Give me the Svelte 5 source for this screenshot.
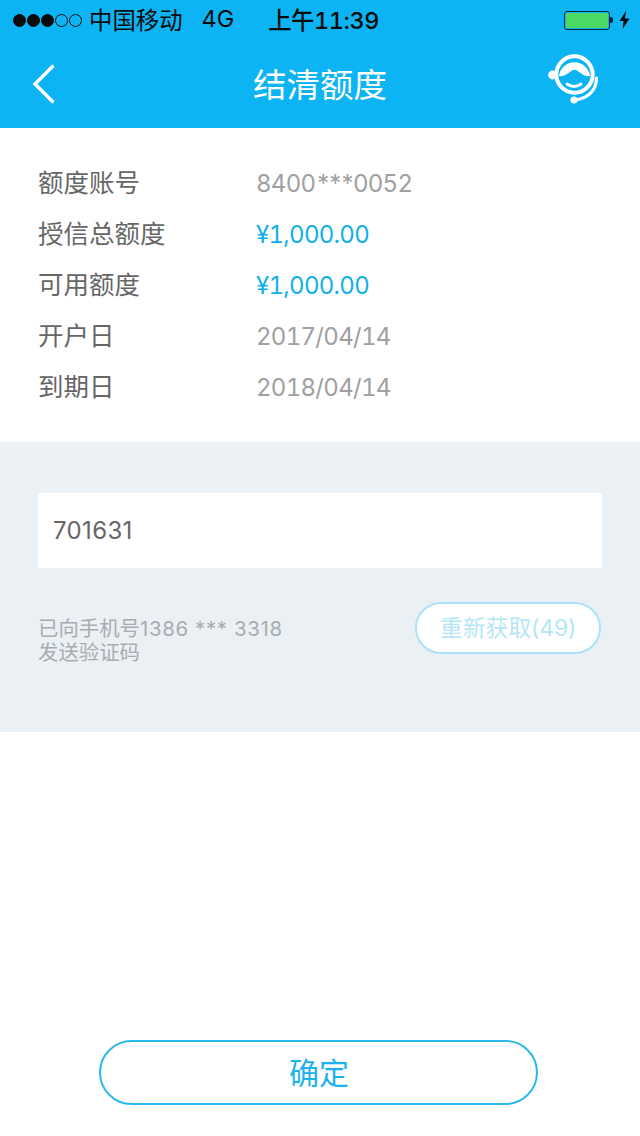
<script>
  const rows = [
    { label: "额度账号", value: "8400", mask: "***", tail: "0052" },
    { label: "授信总额度", value: "¥1,000.00", blue: true },
    { label: "可用额度", value: "¥1,000.00", blue: true },
    { label: "开户日", value: "2017/04/14" },
    { label: "到期日", value: "2018/04/14" }
  ];
</script>

<div class="page">
  <header class="top">
    <div class="status">
      <span class="dots">
        <i class="on"></i><i class="on"></i><i class="on"></i><i></i><i></i>
      </span>
      <span class="carrier">中国移动</span>
      <span class="net">4G</span>
      <span class="time">上午11:39</span>
      <span class="power">
        <span class="battery"><span class="fill"></span></span>
        <span class="nub"></span>
        <svg class="bolt" width="11" height="18" viewBox="0 0 11 18"><path d="M7 0 L0.5 10 H4.6 L3.6 18 L10.5 7.4 H6 Z" fill="#0b0b0b" /></svg>
      </span>
    </div>
    <div class="nav">
      <svg class="back" width="26" height="42" viewBox="0 0 26 42">
        <path d="M22.5 2.5 L4 21 L22.5 39.5" fill="none" stroke="#fff" stroke-width="3.4" />
      </svg>
      <h1>结清额度</h1>
      <svg class="agent" width="54" height="54" viewBox="0 0 54 54">
        <circle cx="28.5" cy="22.5" r="18.2" fill="none" stroke="#fff" stroke-width="4" />
        <path d="M13 24 A15.6 15.6 0 0 1 44 24 C38 25 34 20 31 18.5 C29 17.5 28 17.5 26 18.5 C23 20 19 25 13 24 Z" fill="#fff" />
        <path d="M21 32 Q28 37 35 32" fill="none" stroke="#fff" stroke-width="2.8" stroke-linecap="round" />
        <circle cx="6.5" cy="23" r="4.4" fill="#fff" />
        <path d="M50.5 26 C50.5 38 42 47 28 48" fill="none" stroke="#fff" stroke-width="3.2" stroke-linecap="round" />
        <circle cx="28" cy="48" r="3.6" fill="#fff" />
      </svg>
    </div>
  </header>

  <section class="info">
    {#each rows as row}
      <div class="row">
        <span class="label">{row.label}</span>
        <span class="value" class:blue={row.blue}>{row.value}{#if row.mask}<span class="mask">{row.mask}</span>{row.tail}{/if}</span>
      </div>
    {/each}
  </section>

  <section class="verify">
    <div class="code">701631</div>
    <div class="resend">
      <p>已向手机号<span class="phone">1386 *** 3318</span><br />发送验证码</p>
      <button class="again">重新获取(49)</button>
    </div>
  </section>

  <div class="foot">
    <button class="ok">确定</button>
  </div>
</div>

<style>
  :global(body) {
    background: #fff;
  }
  .page {
    width: 640px;
    height: 1136px;
    display: flex;
    flex-direction: column;
    font-family: Inter, "Noto Sans CJK SC", sans-serif;
    background: #fff;
  }
  .top {
    height: 128px;
    background: #0cb4f4;
    flex: none;
  }
  .status {
    height: 40px;
    box-sizing: border-box;
    display: flex;
    align-items: center;
    padding: 0 10px 0 13px;
    color: #0b0b0b;
    font-size: 23.4px;
  }
  .dots {
    display: flex;
    gap: 1px;
    width: 76px;
    flex: none;
  }
  .dots i {
    width: 13px;
    height: 13px;
    border-radius: 50%;
    border: 1px solid #0b0b0b;
    box-sizing: border-box;
  }
  .dots i.on {
    background: #0b0b0b;
  }
  .carrier,
  .net,
  .time {
    padding-bottom: 3px;
  }
  .net {
    margin-left: 19px;
  }
  .time {
    margin-left: 34px;
    font-weight: 500;
    font-variant-numeric: tabular-nums;
    letter-spacing: -0.4px;
  }
  .power {
    margin-left: auto;
    display: flex;
    align-items: center;
  }
  .battery {
    width: 46px;
    height: 19px;
    box-sizing: border-box;
    border: 1px solid #0b2a3a;
    border-radius: 3px;
    padding: 1px;
    display: flex;
  }
  .fill {
    flex: 1;
    background: #4cd964;
    border-radius: 1px;
  }
  .nub {
    width: 3px;
    height: 6px;
    background: #0b2a3a;
    margin-right: 6px;
    border-radius: 0 2px 2px 0;
  }
  .nav {
    height: 88px;
    display: flex;
    align-items: center;
    justify-content: space-between;
    position: relative;
    padding: 0 40px 0 31px;
  }
  .nav h1 {
    position: absolute;
    left: 0;
    right: 0;
    margin: -4px 0 0;
    text-align: center;
    font-size: 33.5px;
    font-weight: 400;
    color: #fff;
  }
  .agent {
    margin-top: -10px;
  }
  .info {
    height: 314px;
    box-sizing: border-box;
    padding: 30px 38px 0;
  }
  .row {
    height: 51px;
    display: flex;
    align-items: center;
    font-size: 25.5px;
    color: #666;
  }
  .label {
    width: 218px;
    margin-bottom: 6px;
  }
  .value {
    color: #a0a0a0;
    font-size: 24px;
    font-variant-numeric: tabular-nums;
    letter-spacing: -0.72px;
  }
  .value.blue {
    color: #12b0ea;
  }
  .mask {
    letter-spacing: -3.4px;
    margin-right: 1px;
  }
  .verify {
    height: 290px;
    box-sizing: border-box;
    background: #ebf0f5;
    padding: 51px 38px 0;
  }
  .code {
    height: 75px;
    background: #fff;
    padding-left: 15px;
    display: flex;
    align-items: center;
    font-size: 24px;
    letter-spacing: 0.35px;
    color: #666;
  }
  .resend {
    margin-top: 34px;
    display: flex;
    justify-content: space-between;
    align-items: flex-start;
  }
  .resend p {
    margin: 15px 0 0;
    font-size: 20.4px;
    line-height: 24px;
    color: #a8acb0;
  }
  .phone {
    letter-spacing: 0.65px;
  }
  .again {
    width: 186px;
    height: 52px;
    margin-right: 1px;
    padding: 0 0 4px;
    border: 2px solid #a9e3f5;
    border-radius: 26px;
    background: #fff;
    color: #b5e6f8;
    font: inherit;
    font-size: 23px;
    letter-spacing: -0.2px;
  }
  .foot {
    flex: 1;
    display: flex;
    justify-content: center;
    align-items: flex-end;
    padding-bottom: 31px;
  }
  .ok {
    width: 439px;
    height: 65px;
    margin-left: -4px;
    padding: 0 0 4px 2px;
    border: 2px solid #2cb8ee;
    border-radius: 33px;
    background: #fff;
    color: #1cb2ee;
    font: inherit;
    font-size: 30px;
  }
</style>
